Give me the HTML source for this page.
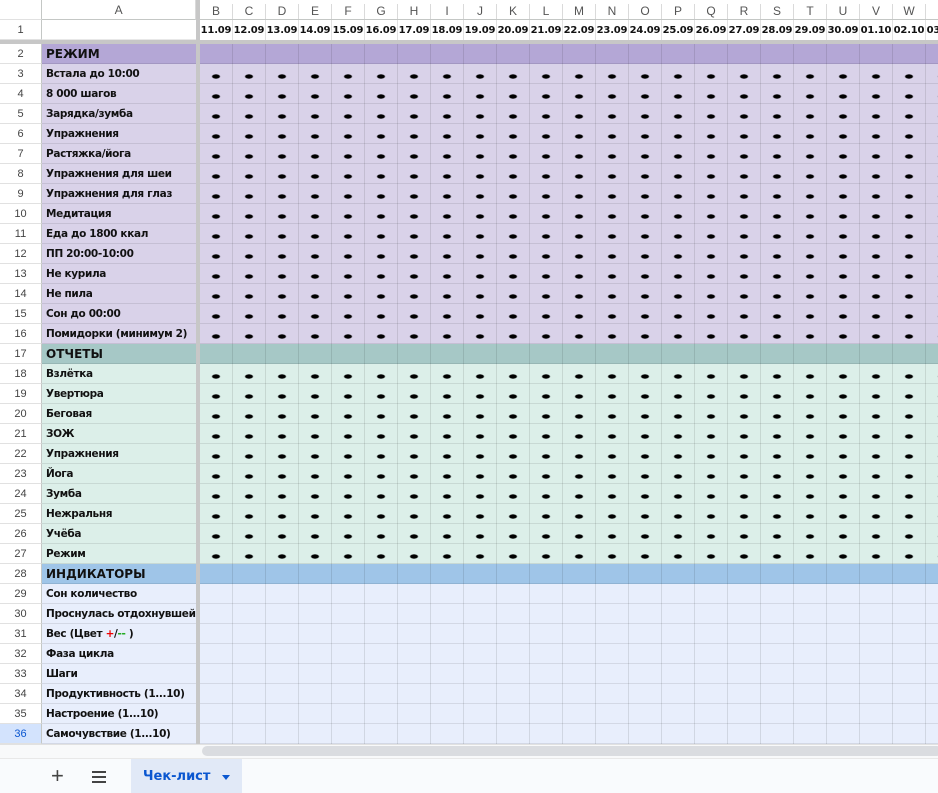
<!DOCTYPE html>
<html><head><meta charset="utf-8"><style>
*{margin:0;padding:0;box-sizing:border-box}
body{width:938px;height:793px;overflow:hidden;background:#fff;font-family:"DejaVu Sans","Liberation Sans",sans-serif;position:relative}
.r{position:absolute;left:0;height:20px;width:938px;display:flex}
.n{width:42px;flex:none;height:20px;border-right:1px solid #c4c7c5;border-bottom:1px solid #e1e1e1;font:11px "Liberation Sans",sans-serif;color:#444;text-align:center;line-height:20px;background:#fff}
.a{width:154px;flex:none;height:20px;border-bottom:1px solid rgba(0,0,0,.09);font-weight:bold;font-size:10.5px;letter-spacing:-0.35px;line-height:21px;padding-left:4px;white-space:nowrap;overflow:hidden;color:#111}
.f{width:4px;flex:none;background:#c7c7c7}
.d{flex:1;height:20px;border-bottom:1px solid rgba(0,0,0,.09);background-image:repeating-linear-gradient(to right,transparent 0 32px,rgba(0,0,0,.1) 32px 33px)}
.dot{background-image:radial-gradient(ellipse 4.6px 2.5px at 16px 12.5px,#000 70%,transparent 100%),repeating-linear-gradient(to right,transparent 0 32px,rgba(0,0,0,.1) 32px 33px);background-size:33px 20px,auto;background-repeat:repeat-x,repeat}
.h{font-size:12px;letter-spacing:0}
.p1{background-color:#b4a7d6}.p2{background-color:#d9d2e9}
.t1{background-color:#a6c8c6}.t2{background-color:#dcefe9}
.b1{background-color:#9fc5e8}.b2{background-color:#e8eefc}
.cols span{display:inline-block;width:33px;text-align:center;border-right:1px solid #dadada;height:20px;line-height:20px;font:12px "Liberation Sans",sans-serif;color:#555}
.dates span{display:inline-block;width:33px;text-align:center;border-right:1px solid #e1e1e1;height:20px;line-height:21px;font-weight:bold;font-size:10px;color:#111;letter-spacing:-0.2px;overflow:hidden;white-space:nowrap}
</style></head><body>
<div class="r" style="top:0"><div class="n"></div><div class="a" style="text-align:center;font:12px 'Liberation Sans',sans-serif;color:#555;padding:0;border-bottom:1px solid #c4c7c5;border-right:1px solid #dadada;line-height:20px">A</div><div class="f"></div><div class="cols" style="white-space:nowrap;overflow:hidden;flex:1;border-bottom:1px solid #c4c7c5"><span>B</span><span>C</span><span>D</span><span>E</span><span>F</span><span>G</span><span>H</span><span>I</span><span>J</span><span>K</span><span>L</span><span>M</span><span>N</span><span>O</span><span>P</span><span>Q</span><span>R</span><span>S</span><span>T</span><span>U</span><span>V</span><span>W</span><span>X</span></div></div>
<div class="r" style="top:20px"><div class="n">1</div><div class="a"></div><div class="f"></div><div class="dates" style="white-space:nowrap;overflow:hidden;flex:1"><span>11.09</span><span>12.09</span><span>13.09</span><span>14.09</span><span>15.09</span><span>16.09</span><span>17.09</span><span>18.09</span><span>19.09</span><span>20.09</span><span>21.09</span><span>22.09</span><span>23.09</span><span>24.09</span><span>25.09</span><span>26.09</span><span>27.09</span><span>28.09</span><span>29.09</span><span>30.09</span><span>01.10</span><span>02.10</span><span>03.10</span></div></div>
<div style="position:absolute;top:40px;left:0;width:938px;height:4px;background:#c7c7c7"></div>

<div class="r" style="top:44px"><div class="n">2</div><div class="a h p1">РЕЖИМ</div><div class="f"></div><div class="d p1"></div></div>
<div class="r" style="top:64px"><div class="n">3</div><div class="a p2">Встала до 10:00</div><div class="f"></div><div class="d dot p2"></div></div>
<div class="r" style="top:84px"><div class="n">4</div><div class="a p2">8 000 шагов</div><div class="f"></div><div class="d dot p2"></div></div>
<div class="r" style="top:104px"><div class="n">5</div><div class="a p2">Зарядка/зумба</div><div class="f"></div><div class="d dot p2"></div></div>
<div class="r" style="top:124px"><div class="n">6</div><div class="a p2">Упражнения</div><div class="f"></div><div class="d dot p2"></div></div>
<div class="r" style="top:144px"><div class="n">7</div><div class="a p2">Растяжка/йога</div><div class="f"></div><div class="d dot p2"></div></div>
<div class="r" style="top:164px"><div class="n">8</div><div class="a p2">Упражнения для шеи</div><div class="f"></div><div class="d dot p2"></div></div>
<div class="r" style="top:184px"><div class="n">9</div><div class="a p2">Упражнения для глаз</div><div class="f"></div><div class="d dot p2"></div></div>
<div class="r" style="top:204px"><div class="n">10</div><div class="a p2">Медитация</div><div class="f"></div><div class="d dot p2"></div></div>
<div class="r" style="top:224px"><div class="n">11</div><div class="a p2">Еда до 1800 ккал</div><div class="f"></div><div class="d dot p2"></div></div>
<div class="r" style="top:244px"><div class="n">12</div><div class="a p2">ПП 20:00-10:00</div><div class="f"></div><div class="d dot p2"></div></div>
<div class="r" style="top:264px"><div class="n">13</div><div class="a p2">Не курила</div><div class="f"></div><div class="d dot p2"></div></div>
<div class="r" style="top:284px"><div class="n">14</div><div class="a p2">Не пила</div><div class="f"></div><div class="d dot p2"></div></div>
<div class="r" style="top:304px"><div class="n">15</div><div class="a p2">Сон до 00:00</div><div class="f"></div><div class="d dot p2"></div></div>
<div class="r" style="top:324px"><div class="n">16</div><div class="a p2">Помидорки (минимум 2)</div><div class="f"></div><div class="d dot p2"></div></div>

<div class="r" style="top:344px"><div class="n">17</div><div class="a h t1">ОТЧЕТЫ</div><div class="f"></div><div class="d t1"></div></div>
<div class="r" style="top:364px"><div class="n">18</div><div class="a t2">Взлётка</div><div class="f"></div><div class="d dot t2"></div></div>
<div class="r" style="top:384px"><div class="n">19</div><div class="a t2">Увертюра</div><div class="f"></div><div class="d dot t2"></div></div>
<div class="r" style="top:404px"><div class="n">20</div><div class="a t2">Беговая</div><div class="f"></div><div class="d dot t2"></div></div>
<div class="r" style="top:424px"><div class="n">21</div><div class="a t2">ЗОЖ</div><div class="f"></div><div class="d dot t2"></div></div>
<div class="r" style="top:444px"><div class="n">22</div><div class="a t2">Упражнения</div><div class="f"></div><div class="d dot t2"></div></div>
<div class="r" style="top:464px"><div class="n">23</div><div class="a t2">Йога</div><div class="f"></div><div class="d dot t2"></div></div>
<div class="r" style="top:484px"><div class="n">24</div><div class="a t2">Зумба</div><div class="f"></div><div class="d dot t2"></div></div>
<div class="r" style="top:504px"><div class="n">25</div><div class="a t2">Нежральня</div><div class="f"></div><div class="d dot t2"></div></div>
<div class="r" style="top:524px"><div class="n">26</div><div class="a t2">Учёба</div><div class="f"></div><div class="d dot t2"></div></div>
<div class="r" style="top:544px"><div class="n">27</div><div class="a t2">Режим</div><div class="f"></div><div class="d dot t2"></div></div>

<div class="r" style="top:564px"><div class="n">28</div><div class="a h b1">ИНДИКАТОРЫ</div><div class="f"></div><div class="d b1"></div></div>
<div class="r" style="top:584px"><div class="n">29</div><div class="a b2">Сон количество</div><div class="f"></div><div class="d b2"></div></div>
<div class="r" style="top:604px"><div class="n">30</div><div class="a b2">Проснулась отдохнувшей</div><div class="f"></div><div class="d b2"></div></div>
<div class="r" style="top:624px"><div class="n">31</div><div class="a b2">Вес (Цвет <span style="color:#e00">+</span>/<span style="color:#2a2">--</span> )</div><div class="f"></div><div class="d b2"></div></div>
<div class="r" style="top:644px"><div class="n">32</div><div class="a b2">Фаза цикла</div><div class="f"></div><div class="d b2"></div></div>
<div class="r" style="top:664px"><div class="n">33</div><div class="a b2">Шаги</div><div class="f"></div><div class="d b2"></div></div>
<div class="r" style="top:684px"><div class="n">34</div><div class="a b2">Продуктивность (1...10)</div><div class="f"></div><div class="d b2"></div></div>
<div class="r" style="top:704px"><div class="n">35</div><div class="a b2">Настроение (1...10)</div><div class="f"></div><div class="d b2"></div></div>
<div class="r" style="top:724px"><div class="n" style="background:#d3e3fd;color:#0b57d0">36</div><div class="a b2">Самочувствие (1...10)</div><div class="f"></div><div class="d b2"></div></div>

<div style="position:absolute;top:744px;left:0;width:938px;height:14px;background:#f8f9fa;border-top:1px solid #e1e1e1"></div>
<div style="position:absolute;top:746px;left:202px;width:740px;height:10px;background:#dadce0;border-radius:5px"></div>
<div style="position:absolute;top:758px;left:0;width:938px;height:35px;background:#f9fbfd;border-top:1px solid #e8e8e8"></div>
<div style="position:absolute;top:764px;left:51px;font:22px 'Liberation Sans',sans-serif;color:#444;line-height:24px">+</div>
<div style="position:absolute;top:771px;left:92px;width:14px">
<div style="height:2px;background:#444;margin-bottom:3px"></div><div style="height:2px;background:#444;margin-bottom:3px"></div><div style="height:2px;background:#444"></div></div>
<div style="position:absolute;top:759px;left:131px;width:111px;height:34px;background:#e1e9f7"></div>
<div style="position:absolute;top:768px;left:143px;font:bold 13px 'DejaVu Sans',sans-serif;color:#0b57d0;line-height:18px">Чек-лист</div>
<div style="position:absolute;top:775px;left:222px;width:0;height:0;border-left:4.5px solid transparent;border-right:4.5px solid transparent;border-top:5px solid #0b57d0"></div>
</body></html>
